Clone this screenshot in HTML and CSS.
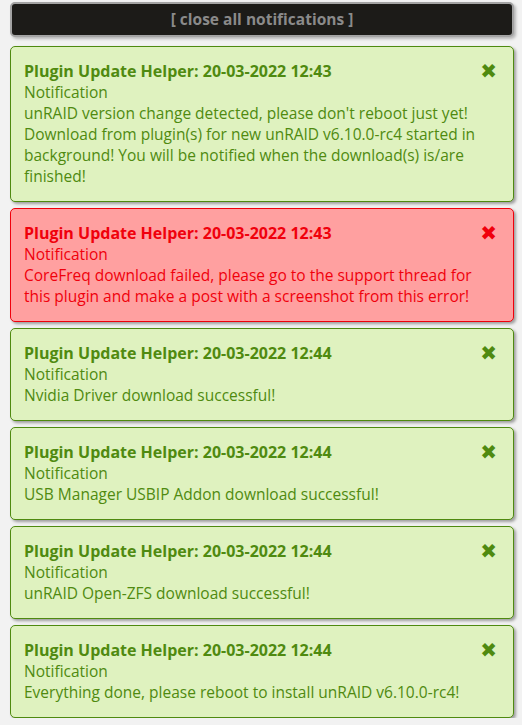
FILE: index.html
```html
<!DOCTYPE html>
<html lang="en">
<head>
    <meta charset="UTF-8">
    <title>Notifications</title>
    <link rel="stylesheet" href="styles.css">
</head>
<body>
    <div class="notify-list">
        <div class="close-all">[ close all notifications ]</div>

        <div class="notice success">
            <span class="close">&#10006;</span>
            <div class="title">Plugin Update Helper: 20-03-2022 12:43</div>
            <div>Notification</div>
            <div>unRAID version change detected, please don't reboot just yet! Download from plugin(s) for new unRAID v6.10.0-rc4 started in background! You will be notified when the download(s) is/are finished!</div>
        </div>

        <div class="notice error">
            <span class="close">&#10006;</span>
            <div class="title">Plugin Update Helper: 20-03-2022 12:43</div>
            <div>Notification</div>
            <div>CoreFreq download failed, please go to the support thread for this plugin and make a post with a screenshot from this error!</div>
        </div>

        <div class="notice success">
            <span class="close">&#10006;</span>
            <div class="title">Plugin Update Helper: 20-03-2022 12:44</div>
            <div>Notification</div>
            <div>Nvidia Driver download successful!</div>
        </div>

        <div class="notice success">
            <span class="close">&#10006;</span>
            <div class="title">Plugin Update Helper: 20-03-2022 12:44</div>
            <div>Notification</div>
            <div>USB Manager USBIP Addon download successful!</div>
        </div>

        <div class="notice success">
            <span class="close">&#10006;</span>
            <div class="title">Plugin Update Helper: 20-03-2022 12:44</div>
            <div>Notification</div>
            <div>unRAID Open-ZFS download successful!</div>
        </div>

        <div class="notice success">
            <span class="close">&#10006;</span>
            <div class="title">Plugin Update Helper: 20-03-2022 12:44</div>
            <div>Notification</div>
            <div>Everything done, please reboot to install unRAID v6.10.0-rc4!</div>
        </div>
    </div>
</body>
</html>
```

FILE: styles.css
```css
body {
    margin: 0;
    background-color: #f2f2f2;
    font-family: "Open Sans", "DejaVu Sans", sans-serif;
    font-size: 15.5px;
    line-height: 21px;
}
.notify-list { padding: 2px 8px 0 10px; display: flex; flex-direction: column; gap: 6px; }
.close-all {
    background-color: #1c1b18;
    color: #8a8a8a;
    font-size: 15.5px;
    font-weight: 700;
    text-align: center;
    border: 2px solid #a3a3a3;
    border-radius: 5px;
    height: 31px;
    line-height: 31px;
    margin-bottom: 3px;
    box-shadow: 2px 2px 3px rgba(0,0,0,0.25);
}
.notice {
    position: relative;
    padding: 14px 36px 14px 13px;
    border: 1px solid;
    border-radius: 5px;
    box-shadow: 2px 2px 3px rgba(0,0,0,0.35);
}
.notice .title { font-weight: 700; font-size: 16px; }
.notice .close { position: absolute; top: 13px; right: 16px; font-size: 20px; font-weight: 700; cursor: pointer; }
.success { background-color: #dff2bf; border-color: #4f8a10; color: #4f8a10; }
.error { background-color: #ffa0a0; border-color: #f0000c; color: #f0000c; }
```
